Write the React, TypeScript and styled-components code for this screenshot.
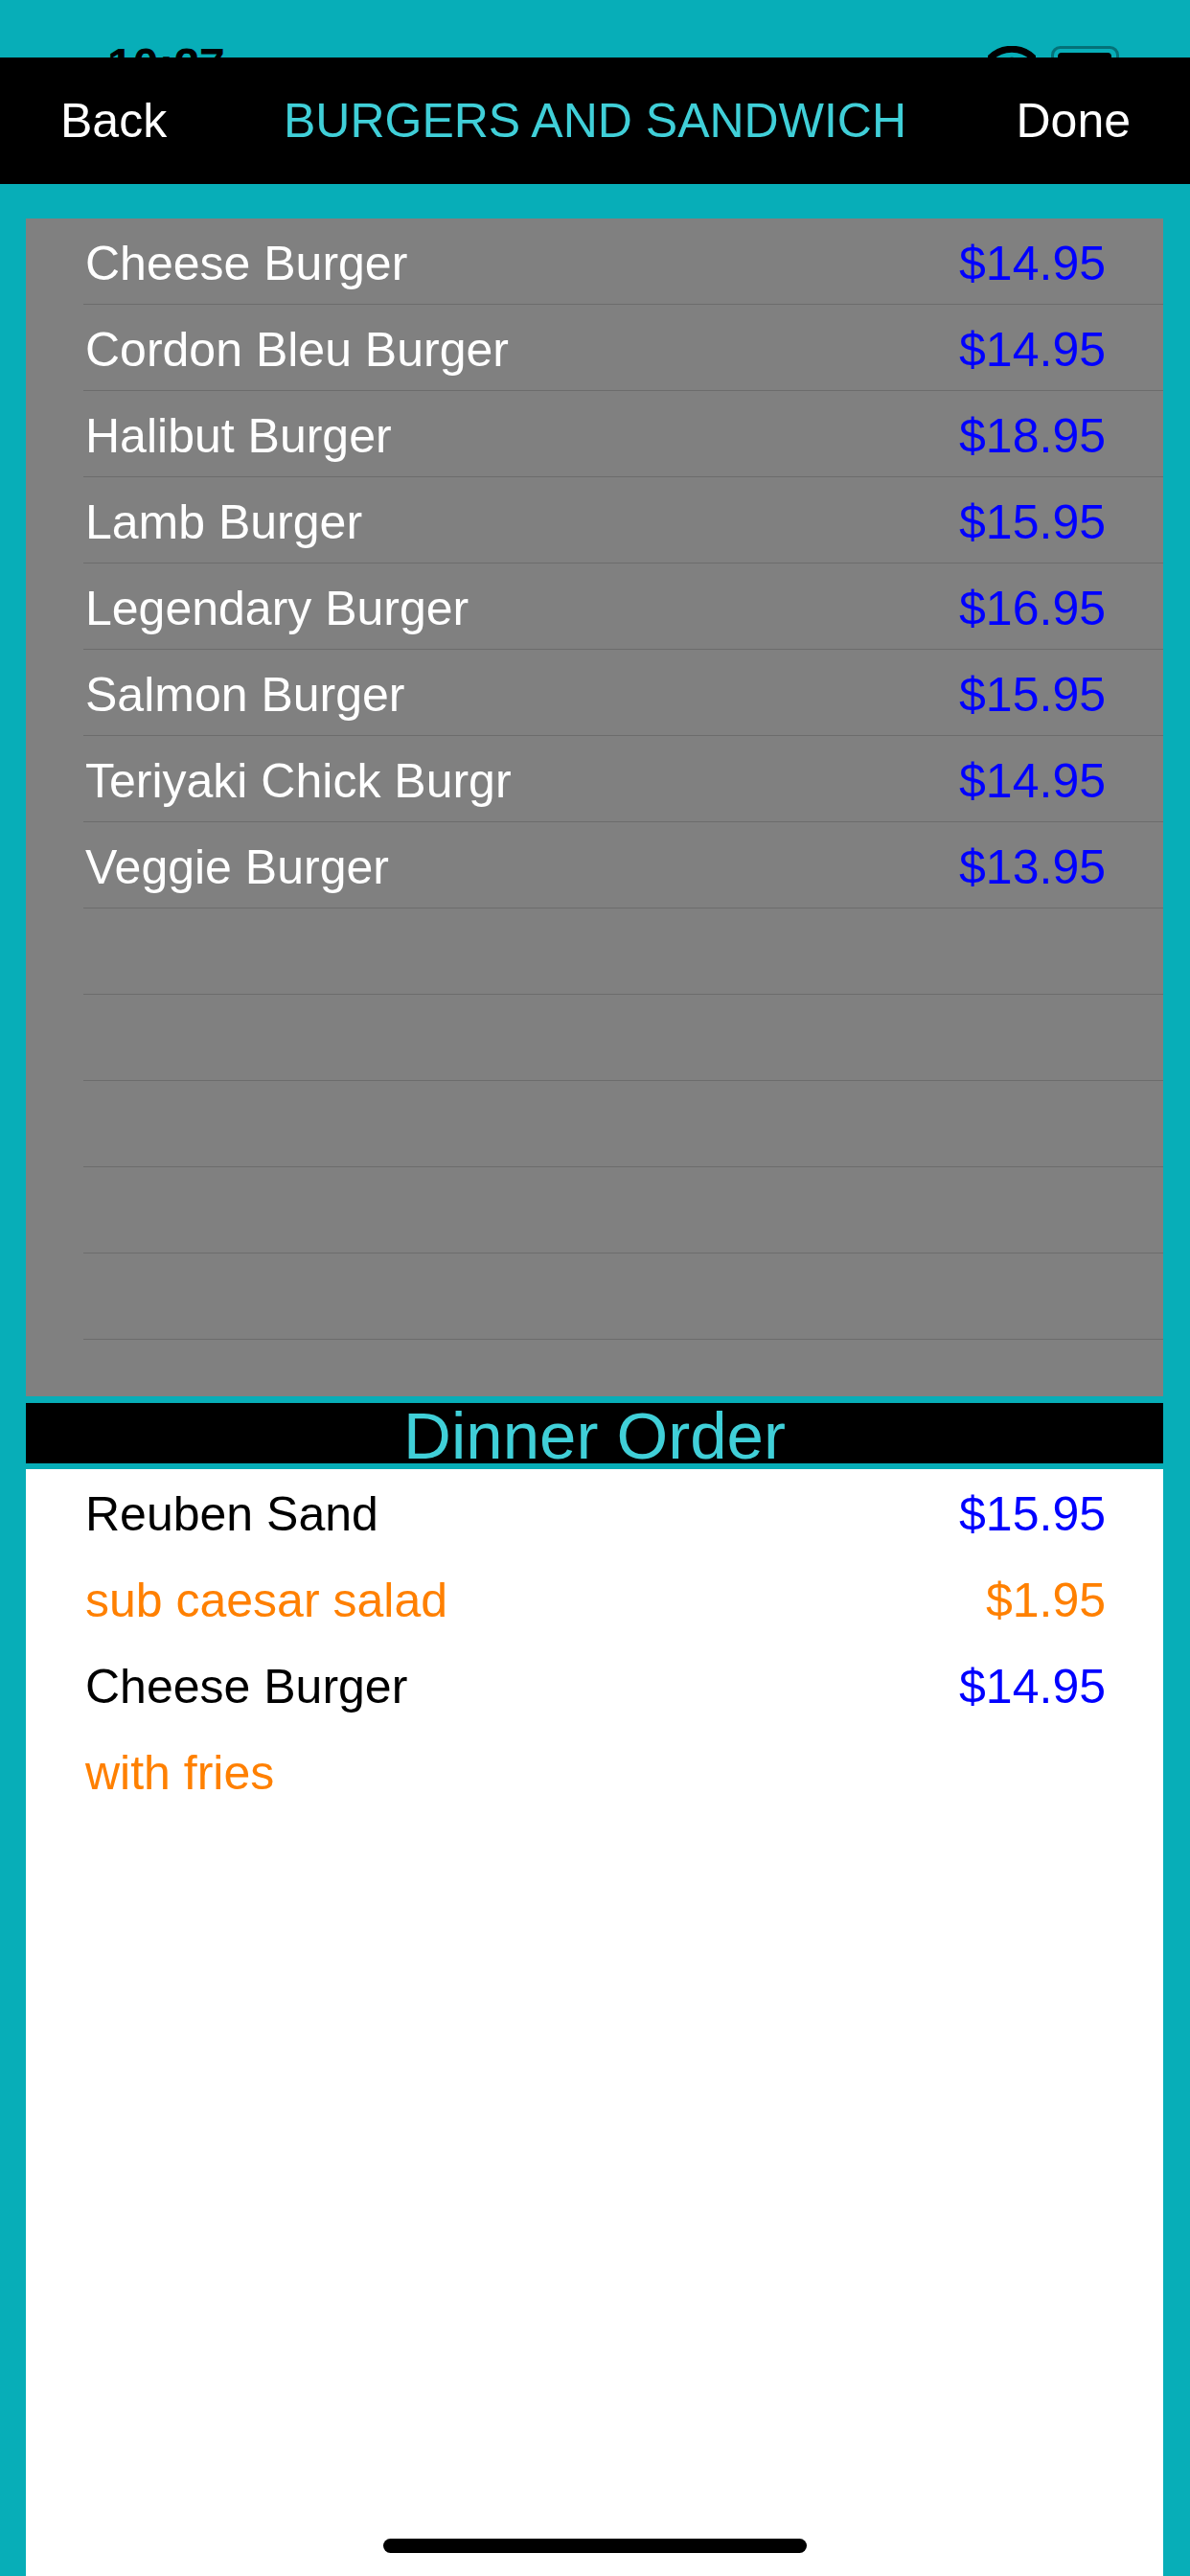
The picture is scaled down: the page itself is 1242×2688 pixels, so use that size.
import React from "react";
import styled, { createGlobalStyle } from "styled-components";

const GlobalStyle = createGlobalStyle`
  body {
    margin: 0;
    background: #07aeb8;
    font-family: "Liberation Sans", Arial, sans-serif;
  }
`;

const Screen = styled.div`
  position: relative;
  width: 1242px;
  height: 2688px;
  overflow: hidden;
  display: flex;
  flex-direction: column;
  background: #07aeb8;
`;

const StatusBar = styled.div`
  box-sizing: border-box;
  height: 60px;
  padding: 44px 69px 0 112px;
  display: flex;
  justify-content: space-between;
  align-items: flex-start;
`;

const Clock = styled.span`
  font-size: 48px;
  line-height: 48px;
  font-weight: 700;
  color: #000;
`;

const StatusIcons = styled.div`
  display: flex;
  gap: 16px;
  padding-top: 4px;
`;

const NavBar = styled.div`
  position: relative;
  z-index: 1;
  height: 132px;
  background: #000;
  display: grid;
  grid-template-columns: 1fr auto 1fr;
  align-items: center;
  font-size: 50px;
`;

const NavButton = styled.span<{ $right?: boolean }>`
  color: #fff;
  justify-self: ${(p) => (p.$right ? "end" : "start")};
  padding: ${(p) => (p.$right ? "0 62px 0 0" : "0 0 0 63px")};
`;

const NavTitle = styled.span`
  color: #40cfd8;
  white-space: nowrap;
`;

const MenuPanel = styled.div`
  margin: 36px 28px 0 27px;
  height: 1229px;
  background: #808080;
`;

const Row = styled.div<{ $sep?: boolean; $color?: string }>`
  box-sizing: border-box;
  height: 90px;
  display: flex;
  justify-content: space-between;
  align-items: center;
  font-size: 50px;
  line-height: 56px;
  padding: 4px 60px 0 ${(p) => (p.$sep ? "2px" : "62px")};
  margin-left: ${(p) => (p.$sep ? "60px" : "0")};
  border-bottom: ${(p) => (p.$sep ? "1px solid #6c6c6c" : "none")};
  color: ${(p) => p.$color || "#fff"};
  white-space: nowrap;
`;

const Price = styled.span<{ $color?: string }>`
  color: ${(p) => p.$color || "#0000ff"};
`;

const SectionHeader = styled.div`
  margin: 7px 28px 0 27px;
  height: 63px;
  line-height: 69px;
  background: #000;
  color: #40cfd8;
  font-size: 69px;
  text-align: center;
  white-space: nowrap;
`;

const OrderPanel = styled.div`
  margin: 6px 28px 0 27px;
  flex: 1;
  background: #fff;
`;

const HomeIndicator = styled.div`
  position: absolute;
  left: 400px;
  bottom: 24px;
  width: 442px;
  height: 15px;
  border-radius: 8px;
  background: #000;
`;

const menu = [
  ["Cheese Burger", "$14.95"],
  ["Cordon Bleu Burger", "$14.95"],
  ["Halibut Burger", "$18.95"],
  ["Lamb Burger", "$15.95"],
  ["Legendary Burger", "$16.95"],
  ["Salmon Burger", "$15.95"],
  ["Teriyaki Chick Burgr", "$14.95"],
  ["Veggie Burger", "$13.95"],
  ["", ""],
  ["", ""],
  ["", ""],
  ["", ""],
  ["", ""],
];

const order = [
  { name: "Reuben Sand", price: "$15.95", extra: false },
  { name: "sub caesar salad", price: "$1.95", extra: true },
  { name: "Cheese Burger", price: "$14.95", extra: false },
  { name: "with fries", price: "", extra: true },
];

const Wifi = () => (
  <svg width="50" height="36" viewBox="0 0 50 36">
    <path d="M3 12 A32 32 0 0 1 47 12" fill="none" stroke="#000" strokeWidth="7" strokeLinecap="round" />
    <path d="M11 21 A20 20 0 0 1 39 21" fill="none" stroke="#000" strokeWidth="7" strokeLinecap="round" />
    <path d="M25 34 L18 28 A10 10 0 0 1 32 28 Z" fill="#000" />
  </svg>
);

const Battery = () => (
  <svg width="76" height="34" viewBox="0 0 76 34">
    <rect x="1.5" y="1.5" width="68" height="31" rx="8" fill="none" stroke="#000" strokeOpacity="0.35" strokeWidth="3" />
    <rect x="7" y="7" width="56" height="20" rx="4" fill="#000" />
    <path d="M72 12 a4 5 0 0 1 0 10 Z" fill="#000" fillOpacity="0.4" />
  </svg>
);

export default function App() {
  return (
    <Screen>
      <GlobalStyle />
      <StatusBar>
        <Clock>10:27</Clock>
        <StatusIcons>
          <Wifi />
          <Battery />
        </StatusIcons>
      </StatusBar>
      <NavBar>
        <NavButton>Back</NavButton>
        <NavTitle>BURGERS AND SANDWICH</NavTitle>
        <NavButton $right>Done</NavButton>
      </NavBar>

      <MenuPanel>
        {menu.map(([name, price], i) => (
          <Row $sep key={i}>
            <span>{name}</span>
            <Price>{price}</Price>
          </Row>
        ))}
      </MenuPanel>

      <SectionHeader>Dinner Order</SectionHeader>
      <OrderPanel>
        {order.map((item, i) => (
          <Row key={i} $color={item.extra ? "#ff8000" : "#000"}>
            <span>{item.name}</span>
            <Price $color={item.extra ? "#ff8000" : "#0000ff"}>{item.price}</Price>
          </Row>
        ))}
      </OrderPanel>
      <HomeIndicator />
    </Screen>
  );
}
